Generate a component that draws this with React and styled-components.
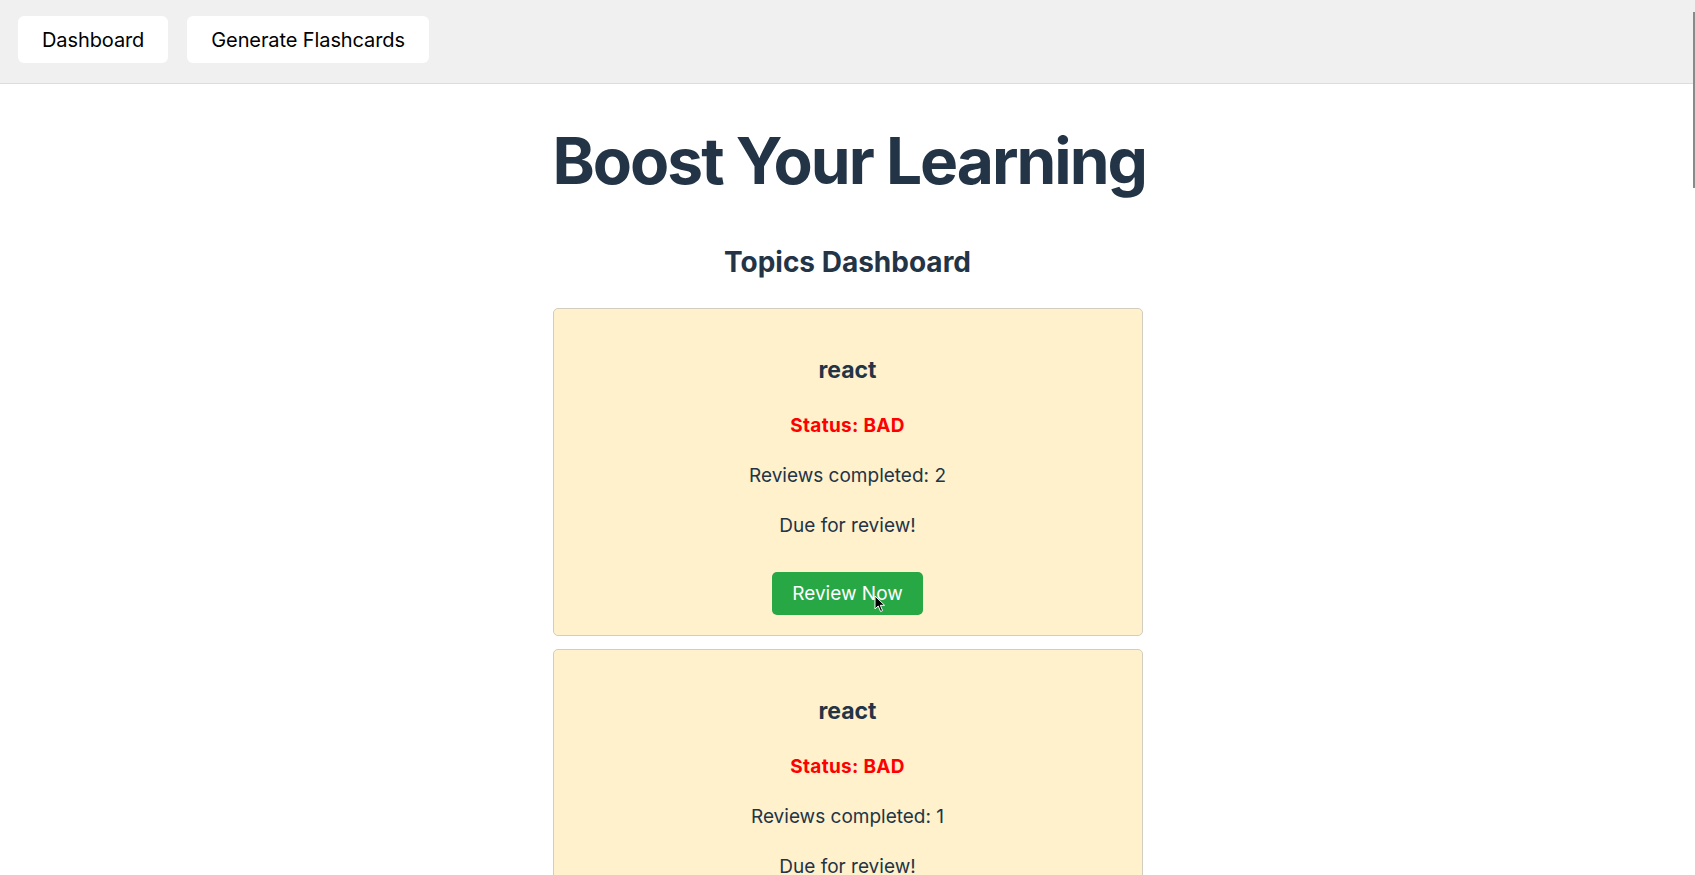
import React from "react";
import styled, { createGlobalStyle } from "styled-components";

const GlobalStyle = createGlobalStyle`
	html {
		scrollbar-width: none;
	}
	html::-webkit-scrollbar,
	body::-webkit-scrollbar {
		display: none;
	}
	body {
		margin: 0;
		background: #ffffff;
		font-family: Inter, "Noto Sans", sans-serif;
		color: #233446;
	}
`;

const topics = [
	{ id: 1, name: "react", status: "BAD", reviews: 2, due: true },
	{ id: 2, name: "react", status: "BAD", reviews: 1, due: true },
];

const NavBar = styled.nav`
	display: flex;
	align-items: flex-start;
	gap: 19px;
	height: 84px;
	padding: 16px 18px 0;
	box-sizing: border-box;
	background: #f0f0f0;
	border-bottom: 1px solid #dcdcdc;
`;

const NavButton = styled.button`
	height: 47px;
	padding: 0 24px;
	border: none;
	border-radius: 6px;
	background: #ffffff;
	color: #000000;
	font-family: Inter, "Noto Sans", sans-serif;
	font-size: 20px;
	letter-spacing: -0.1px;
	cursor: pointer;
`;

const Main = styled.main`
	width: 590px;
	margin: 0 auto;
	text-align: center;
`;

const Title = styled.h1`
	margin: 38px 0 0;
	font-size: 64px;
	line-height: 78px;
	font-weight: 700;
	letter-spacing: -2px;
	white-space: nowrap;
`;

const SubTitle = styled.h2`
	margin: 45px 0 29px;
	font-size: 28px;
	line-height: 34px;
	font-weight: 700;
`;

const CardList = styled.div`
	display: flex;
	flex-direction: column;
	gap: 13px;
`;

const Card = styled.div`
	padding: 20px;
	background: #fef1cc;
	border: 1px solid #d2cdbf;
	border-radius: 5px;
`;

const TopicName = styled.h3`
	margin: 23px 0 24px;
	font-size: 23px;
	line-height: 36px;
	font-weight: 700;
`;

const Line = styled.p`
	margin: 22px 0 0;
	font-size: 19px;
	line-height: 28px;
	font-weight: ${(p) => (p.$bold ? 700 : 400)};
	letter-spacing: ${(p) => (p.$bold ? "0.3px" : "0")};
	color: ${(p) => p.$color || "#233446"};
`;

const ReviewButton = styled.button`
	position: relative;
	margin-top: 32px;
	height: 43px;
	padding: 0 20px;
	border: none;
	border-radius: 5px;
	background: #28a745;
	color: #ffffff;
	font-family: Inter, "Noto Sans", sans-serif;
	font-size: 19px;
	cursor: pointer;
`;

const Cursor = styled.svg`
	position: absolute;
	left: 102px;
	top: 23px;
	pointer-events: none;
`;

const ScrollThumb = styled.div`
	position: fixed;
	top: 12px;
	right: 0;
	width: 2px;
	height: 176px;
	background: #8a8a8a;
`;

const App = () => {
	return (
		<>
			<GlobalStyle />
			<NavBar>
				<NavButton>Dashboard</NavButton>
				<NavButton>Generate Flashcards</NavButton>
			</NavBar>
			<Main>
				<Title>Boost Your Learning</Title>
				<SubTitle>Topics Dashboard</SubTitle>
				<CardList>
					{topics.map((t, i) => (
						<Card key={t.id}>
							<TopicName>{t.name}</TopicName>
							<Line $bold $color="#ff0000">
								Status: {t.status}
							</Line>
							<Line>Reviews completed: {t.reviews}</Line>
							{t.due && <Line>Due for review!</Line>}
							<ReviewButton>
								Review Now
								{i === 0 && (
									<Cursor width="12" height="18" viewBox="0 0 12 18">
										<path
											d="M1 1 L1 14 L4.2 11 L6.6 16.5 L8.6 15.6 L6.3 10.3 L10.6 10.3 Z"
											fill="#000"
											stroke="#fff"
											strokeWidth="1"
										/>
									</Cursor>
								)}
							</ReviewButton>
						</Card>
					))}
				</CardList>
			</Main>
			<ScrollThumb />
		</>
	);
};

export default App;
